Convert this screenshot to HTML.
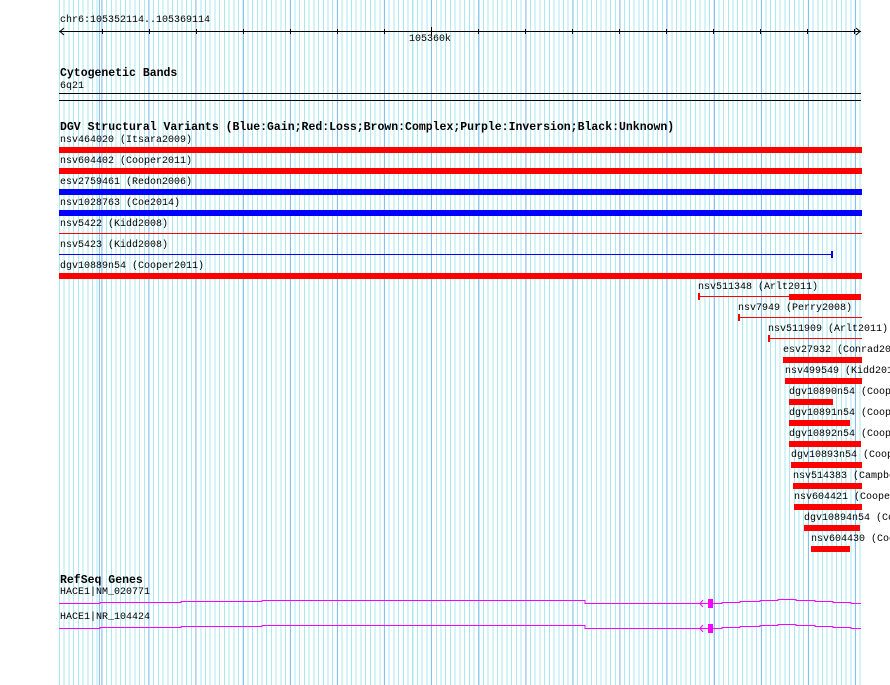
<!DOCTYPE html>
<html><head><meta charset="utf-8"><style>
html,body{margin:0;padding:0;background:#fff;}
#c{position:relative;width:890px;height:685px;overflow:hidden;font-family:"Liberation Mono","DejaVu Sans Mono",monospace;font-size:10px;color:#000;}
#grid{position:absolute;left:59px;top:0;width:803px;height:685px;
background-image:
repeating-linear-gradient(to right,#80bce8 0,#80bce8 1px,transparent 1px,transparent 47.1px),
repeating-linear-gradient(to right,#a8eaf0 0,#a8eaf0 1px,transparent 1px,transparent 4.71px);
background-position:42.4px 0,0 0;}
.t{position:absolute;white-space:pre;line-height:10px;}
.b{position:absolute;font-weight:bold;font-size:11.5px;white-space:pre;line-height:11px;}
.r{position:absolute;background:#f00;}
.u{position:absolute;background:#00f;}
.k{position:absolute;background:#000;}
</style></head><body><div id="c">
<div id="grid"></div>
<div class="t" style="left:60px;top:16px">chr6:105352114..105369114</div>
<svg style="position:absolute;left:0;top:0" width="890" height="685">
<g stroke="#000" stroke-width="1" fill="none">
<line x1="59" y1="31.5" x2="861" y2="31.5"/>
<polyline points="64,28 60,31.5 64,35"/>
<polyline points="856,28 860,31.5 856,35"/>
<line x1="102.5" y1="29" x2="102.5" y2="34"/><line x1="149.5" y1="29" x2="149.5" y2="34"/><line x1="196.5" y1="29" x2="196.5" y2="34"/><line x1="243.5" y1="29" x2="243.5" y2="34"/><line x1="290.5" y1="29" x2="290.5" y2="34"/><line x1="337.5" y1="29" x2="337.5" y2="34"/><line x1="384.5" y1="29" x2="384.5" y2="34"/><line x1="431.5" y1="27" x2="431.5" y2="35"/><line x1="478.5" y1="29" x2="478.5" y2="34"/><line x1="525.5" y1="29" x2="525.5" y2="34"/><line x1="572.5" y1="29" x2="572.5" y2="34"/><line x1="619.5" y1="29" x2="619.5" y2="34"/><line x1="666.5" y1="29" x2="666.5" y2="34"/><line x1="713.5" y1="29" x2="713.5" y2="34"/><line x1="760.5" y1="29" x2="760.5" y2="34"/><line x1="807.5" y1="29" x2="807.5" y2="34"/><line x1="854.5" y1="29" x2="854.5" y2="34"/>
<line x1="59" y1="93.5" x2="861" y2="93.5"/>
<line x1="59" y1="100.5" x2="861" y2="100.5"/>
</g>
<g stroke="#f0f" stroke-width="1" fill="none">
<polyline points="59,603.5 100,603.5 100,602.5 181,602.5 181,601.5 262,601.5 262,600.5 585,600.5 585,603.5 708,603.5 M713,603.5"/>
<polyline points="713,603.5 722,603.5 722,602.5 740,602.5 740,601.5 760,601.5 760,600.5 778,600.5 778,599.5 796,599.5 796,600.5 815,600.5 815,601.5 833,601.5 833,602.5 851,602.5 851,603.5 861,603.5"/>
<polyline points="59,628.5 100,628.5 100,627.5 181,627.5 181,626.5 262,626.5 262,625.5 585,625.5 585,628.5 708,628.5"/>
<polyline points="713,628.5 722,628.5 722,627.5 740,627.5 740,626.5 760,626.5 760,625.5 778,625.5 778,624.5 796,624.5 796,625.5 815,625.5 815,626.5 833,626.5 833,627.5 851,627.5 851,628.5 861,628.5"/>
<polyline points="703,600 700,603.5 703,607"/>
<polyline points="703,625 700,628.5 703,632"/>
</g>
<rect x="708" y="599" width="5" height="9" fill="#f0f"/>
<rect x="708" y="624" width="5" height="9" fill="#f0f"/>
</svg>
<div class="t" style="left:409px;top:35px">105360k</div>
<div class="b" style="left:60px;top:68px">Cytogenetic Bands</div>
<div class="t" style="left:60px;top:82px">6q21</div>
<div class="b" style="left:60px;top:122px">DGV Structural Variants (Blue:Gain;Red:Loss;Brown:Complex;Purple:Inversion;Black:Unknown)</div>

<div class="t" style="left:60px;top:136px">nsv464020 (Itsara2009)</div><div class="r" style="left:59px;top:147px;width:803px;height:6px"></div>
<div class="t" style="left:60px;top:157px">nsv604402 (Cooper2011)</div><div class="r" style="left:59px;top:168px;width:803px;height:6px"></div>
<div class="t" style="left:60px;top:178px">esv2759461 (Redon2006)</div><div class="u" style="left:59px;top:189px;width:803px;height:6px"></div>
<div class="t" style="left:60px;top:199px">nsv1028763 (Coe2014)</div><div class="u" style="left:59px;top:210px;width:803px;height:6px"></div>
<div class="t" style="left:60px;top:220px">nsv5422 (Kidd2008)</div><div class="r" style="left:59px;top:233px;width:803px;height:1px"></div>
<div class="t" style="left:60px;top:241px">nsv5423 (Kidd2008)</div><div class="u" style="left:59px;top:254px;width:773px;height:1px"></div><div class="u" style="left:831px;top:251px;width:2px;height:7px"></div>
<div class="t" style="left:60px;top:262px">dgv10889n54 (Cooper2011)</div><div class="r" style="left:59px;top:273px;width:803px;height:6px"></div>

<div class="t" style="left:698px;top:283px">nsv511348 (Arlt2011)</div><div class="r" style="left:698px;top:296px;width:163px;height:1px"></div><div class="r" style="left:698px;top:293px;width:2px;height:7px"></div><div class="r" style="left:789px;top:294px;width:72px;height:6px"></div>
<div class="t" style="left:738px;top:304px">nsv7949 (Perry2008)</div><div class="r" style="left:738px;top:317px;width:124px;height:1px"></div><div class="r" style="left:738px;top:314px;width:2px;height:7px"></div>
<div class="t" style="left:768px;top:325px">nsv511909 (Arlt2011)</div><div class="r" style="left:768px;top:338px;width:94px;height:1px"></div><div class="r" style="left:768px;top:335px;width:2px;height:7px"></div>
<div class="t" style="left:783px;top:346px">esv27932 (Conrad2010)</div><div class="r" style="left:783px;top:357px;width:79px;height:6px"></div>
<div class="t" style="left:785px;top:367px">nsv499549 (Kidd2010)</div><div class="r" style="left:785px;top:378px;width:77px;height:6px"></div>
<div class="t" style="left:789px;top:388px">dgv10890n54 (Cooper2011)</div><div class="r" style="left:789px;top:399px;width:44px;height:6px"></div>
<div class="t" style="left:789px;top:409px">dgv10891n54 (Cooper2011)</div><div class="r" style="left:789px;top:420px;width:61px;height:6px"></div>
<div class="t" style="left:789px;top:430px">dgv10892n54 (Cooper2011)</div><div class="r" style="left:789px;top:441px;width:72px;height:6px"></div>
<div class="t" style="left:791px;top:451px">dgv10893n54 (Cooper2011)</div><div class="r" style="left:791px;top:462px;width:71px;height:6px"></div>
<div class="t" style="left:793px;top:472px">nsv514383 (Campbell2011)</div><div class="r" style="left:793px;top:483px;width:69px;height:6px"></div>
<div class="t" style="left:794px;top:493px">nsv604421 (Cooper2011)</div><div class="r" style="left:794px;top:504px;width:68px;height:6px"></div>
<div class="t" style="left:804px;top:514px">dgv10894n54 (Cooper2011)</div><div class="r" style="left:804px;top:525px;width:56px;height:6px"></div>
<div class="t" style="left:811px;top:535px">nsv604430 (Cooper2011)</div><div class="r" style="left:811px;top:546px;width:39px;height:6px"></div>

<div class="b" style="left:60px;top:575px">RefSeq Genes</div>
<div class="t" style="left:60px;top:588px">HACE1|NM_020771</div>
<div class="t" style="left:60px;top:613px">HACE1|NR_104424</div>
</div></body></html>
